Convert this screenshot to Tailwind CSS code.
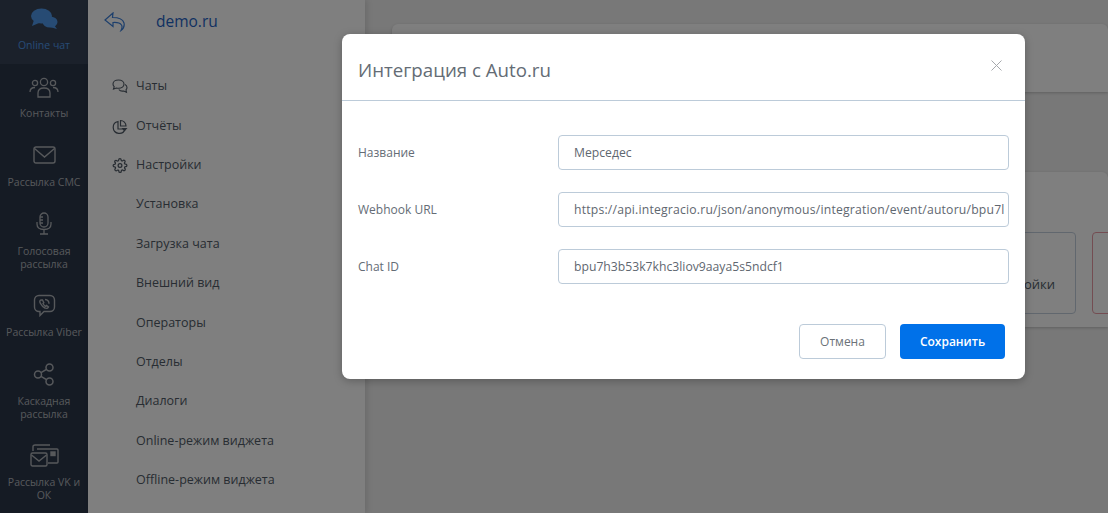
<!DOCTYPE html>
<html lang="ru">
<head>
  <meta charset="UTF-8">
  <title>Интеграция с Auto.ru</title>
  <script src="https://cdn.jsdelivr.net/npm/@tailwindcss/browser@4"></script>
</head>
<body class="relative h-[513px] w-[1108px] overflow-hidden bg-white font-['Open_Sans','Noto_Sans',sans-serif]">

  <!-- page behind the modal -->
  <div class="flex h-full">
    <nav class="flex w-[88px] shrink-0 flex-col items-center bg-[#2a3649] text-center text-[10.500px] leading-[13px] text-[#aeb2b7]">
      <div class="flex h-[64px] w-full flex-col items-center bg-[#364357] pt-[8px] text-[#4f97e8]">
        <svg class="h-[22px] w-[28px]" viewBox="0 0 28 22" fill="currentColor"><ellipse cx="11.500" cy="8" rx="10.500" ry="7.500"/><path d="M4 12 2 18l7-3z"/><ellipse cx="20" cy="14" rx="7.500" ry="5.500"/><path d="M24 17l3 4-7-2z"/></svg>
        <span class="mt-[9px]">Online чат</span>
      </div>
      <div class="flex h-[70px] w-full flex-col items-center pt-[13px]">
        <svg class="h-[22px] w-[30px]" viewBox="0 0 30 22" fill="none" stroke="currentColor" stroke-width="1.300"><circle cx="15" cy="5" r="3.600"/><circle cx="6" cy="6" r="2.600"/><circle cx="24" cy="6" r="2.600"/><path d="M9 20v-4c0-3 2-5 6-5s6 2 6 5v4z"/><path d="M1 15c0-3 2-4.500 5-4.500 M29 15c0-3-2-4.500-5-4.500"/></svg>
        <span class="mt-[8px]">Контакты</span>
      </div>
      <div class="flex h-[69px] w-full flex-col items-center pt-[12px]">
        <svg class="h-[18px] w-[23px]" viewBox="0 0 23 18" fill="none" stroke="currentColor" stroke-width="1.400"><rect x="1" y="1" width="21" height="16" rx="2"/><path d="M1.500 2.500 11.500 11l10-8.500"/></svg>
        <span class="mt-[12px]">Рассылка СМС</span>
      </div>
      <div class="flex h-[90px] w-full flex-col items-center pt-[9px]">
        <svg class="h-[23px] w-[16px]" viewBox="0 0 16 23" fill="none" stroke="currentColor" stroke-width="1.300"><rect x="4" y="1" width="8" height="14" rx="4"/><path d="M4 5h3M4 8h3M4 11h3M1 10v2c0 3.500 3 5.500 7 5.500s7-2 7-5.500v-2M8 17.500V22M4 22h8"/></svg>
        <span class="mt-[10px]">Голосовая<br>рассылка</span>
      </div>
      <div class="flex h-[70px] w-full flex-col items-center pt-[1px]">
        <svg class="h-[23px] w-[23px]" viewBox="0 0 23 23" fill="none" stroke="currentColor" stroke-width="1.400"><path d="M6 1.500h11c2.500 0 4.500 2 4.500 4.500v7c0 2.500-2 4.500-4.500 4.500h-6L7 21.500v-4H6c-2.500 0-4.500-2-4.500-4.500V6c0-2.500 2-4.500 4.500-4.500z"/><path d="M8 6c-1.500.5-1.500 2-.5 3.500 1 2 2.500 3.500 4.500 4.500 1.500.8 3 .3 3.500-1l-2-1.500-1 .8c-1-.5-2-1.500-2.500-2.700l.8-1L9.500 6zM12 5.500c2.500.2 4 1.800 4 4.200"/></svg>
        <span class="mt-[9px]">Рассылка Viber</span>
      </div>
      <div class="flex h-[81px] w-full flex-col items-center">
        <svg class="h-[23px] w-[22px]" viewBox="0 0 22 23" fill="none" stroke="currentColor" stroke-width="1.500"><circle cx="5" cy="11.500" r="3.500"/><circle cx="16.500" cy="4.500" r="3.500"/><circle cx="16.500" cy="18.500" r="3.500"/><path d="m8 9.700 5.500-3.400M8 13.300l5.500 3.400"/></svg>
        <span class="mt-[9px]">Каскадная<br>рассылка</span>
      </div>
      <div class="flex w-full flex-col items-center">
        <svg class="h-[23px] w-[29px]" viewBox="0 0 29 23" fill="none" stroke="currentColor" stroke-width="1.400"><path d="M3 7V2.500C3 1.500 4 1 5 1h15M7 5h20c.6 0 1 .4 1 1v12c0 .6-.4 1-1 1h-9"/><rect x="1" y="9" width="16" height="13" rx="1.500"/><path d="m1.500 11 7.500 6 7.500-6"/><rect x="21" y="8" width="4" height="3.500" fill="currentColor"/></svg>
        <span class="mt-[9px] w-[76px]">Рассылка VK и ОК</span>
      </div>
    </nav>

    <aside class="relative w-[277px] shrink-0 bg-white text-[12.500px] text-[#505a66] shadow-[2px_0_6px_rgba(0,0,0,0.12)]">
      <div class="flex h-[44px] items-center pl-[16px]">
        <svg class="h-[20px] w-[21px] text-[#3a7ed8]" viewBox="0 0 21 20" fill="none" stroke="currentColor" stroke-width="1.200"><path d="M9 1 1 8l8 6.500V10.500c4-.3 7 .5 8.500 2.500 1 1.500.5 3.500-.5 5.500 3-2 3.500-5 3-7.500-1-3.500-5-5.500-11.500-5.500z"/></svg>
        <span class="ml-[31px] text-[15.500px] text-[#1f63c4]">demo.ru</span>
      </div>
      <ul class="mt-[23px]">
        <li class="flex h-[39.400px] items-center pl-[24px]">
          <svg class="mr-[8px] h-[15px] w-[16px]" viewBox="0 0 16 15" fill="none" stroke="currentColor" stroke-width="1.100"><path d="M6.500 1C3 1 1 3 1 5c0 1 .5 2 1.200 2.700L1.500 10l2.800-1c.7.200 1.400.3 2.200.3 3.200 0 5.500-1.800 5.500-4.200S9.700 1 6.500 1z"/><path d="M13 5.500c1.300.7 2 1.700 2 3 0 1-.4 1.700-1 2.300l.5 2.500-2.700-1.300c-2 .4-4-.2-5-1.500"/></svg>
          Чаты
        </li>
        <li class="flex h-[39.400px] items-center pl-[24px]">
          <svg class="mr-[8px] h-[15px] w-[16px]" viewBox="0 0 16 15" fill="none" stroke="currentColor" stroke-width="1.200"><path d="M6 2.500a6 6 0 1 0 7 7.500H6z"/><path d="M8.500 1.500v5.500H14a5.500 5.500 0 0 0-5.500-5.500z"/><path d="M9.500 9h6l-3 3.500z" fill="currentColor" stroke="none"/></svg>
          Отчёты
        </li>
        <li class="flex h-[39.400px] items-center pl-[24px]">
          <svg class="mr-[8px] h-[15px] w-[16px]" viewBox="0 0 24 24" fill="none" stroke="currentColor" stroke-width="2"><circle cx="12" cy="12" r="3"/><path d="M19.400 15a1.650 1.650 0 0 0 .33 1.820l.06.06a2 2 0 1 1-2.830 2.830l-.06-.06a1.650 1.650 0 0 0-2.800 1.170V21a2 2 0 0 1-4 0v-.09a1.650 1.650 0 0 0-2.830-1.140l-.06.06a2 2 0 1 1-2.830-2.830l.06-.06a1.650 1.650 0 0 0-1.170-2.800H3a2 2 0 0 1 0-4h.09a1.650 1.650 0 0 0 1.140-2.830l-.06-.06a2 2 0 1 1 2.830-2.830l.06.06a1.650 1.650 0 0 0 2.800-1.170V3a2 2 0 0 1 4 0v.09a1.650 1.650 0 0 0 2.830 1.140l.06-.06a2 2 0 1 1 2.830 2.830l-.06.06a1.650 1.650 0 0 0 1.170 2.800H21a2 2 0 0 1 0 4h-.09a1.650 1.650 0 0 0-1.510 1z"/></svg>
          Настройки
        </li>
        <li class="flex h-[39.400px] items-center pl-[48px]">Установка</li>
        <li class="flex h-[39.400px] items-center pl-[48px]">Загрузка чата</li>
        <li class="flex h-[39.400px] items-center pl-[48px]">Внешний вид</li>
        <li class="flex h-[39.400px] items-center pl-[48px]">Операторы</li>
        <li class="flex h-[39.400px] items-center pl-[48px]">Отделы</li>
        <li class="flex h-[39.400px] items-center pl-[48px]">Диалоги</li>
        <li class="flex h-[39.400px] items-center pl-[48px]">Online-режим виджета</li>
        <li class="flex h-[39.400px] items-center pl-[48px]">Offline-режим виджета</li>
      </ul>
    </aside>

    <main class="flex-1 overflow-hidden bg-[#f0f0f0] pl-[27px] pt-[24px]">
      <div class="h-[68px] rounded-t-[6px] bg-white shadow-[0_1px_3px_rgba(0,0,0,0.2)]"></div>
      <div class="mt-[80px] h-[155px] rounded-t-[6px] bg-white pl-[560px] pt-[60px] shadow-[0_1px_3px_rgba(0,0,0,0.2)]">
        <div class="flex gap-[16px]">
          <div class="flex h-[82px] w-[124px] shrink-0 items-end justify-center rounded-[4px] border border-[#c3cfdd] pb-[19px] pl-[14px] text-[13px] text-[#505a66]">Настройки</div>
          <div class="h-[82px] w-[124px] shrink-0 rounded-[4px] border border-[#e89aa5]"></div>
        </div>
      </div>
    </main>
  </div>

  <!-- modal backdrop -->
  <div class="absolute inset-0 bg-black/50"></div>

  <div class="absolute left-[342px] top-[34px] w-[683px] rounded-[8px] bg-white shadow-[0_2px_8px_rgba(0,0,0,0.25)]">
    <header class="relative flex h-[67px] items-center border-b border-[#bccbd9] pl-[16px] pt-[6px] text-[18.700px] text-[#646c75]">
      Интеграция с Auto.ru
      <svg class="absolute right-[23px] top-[26px] h-[11px] w-[11px] text-[#a6a9ad]" viewBox="0 0 11 11" fill="none" stroke="currentColor" stroke-width="1"><path d="m.5.5 10 10M10.500.5l-10 10"/></svg>
    </header>
    <div class="flex flex-col gap-[22px] px-[16px] pt-[34px] text-[12px] text-[#646c75]">
      <label class="flex items-center">
        <span class="w-[200px] shrink-0">Название</span>
        <div class="h-[35px] w-[451px] overflow-hidden whitespace-nowrap rounded-[4px] border border-[#bccbd9] pl-[15px] text-[12.200px] leading-[34px] text-[#5f6770]">Мерседес</div>
      </label>
      <label class="flex items-center">
        <span class="w-[200px] shrink-0">Webhook URL</span>
        <div class="h-[35px] w-[451px] overflow-hidden rounded-[4px] border border-[#bccbd9] pl-[15px] text-[12.200px] leading-[33px] tracking-[0.2px] text-[#5f6770]">https://api.integracio.ru/json/anonymous/integration/event/autoru/bpu7l</div>
      </label>
      <label class="flex items-center">
        <span class="w-[200px] shrink-0">Chat ID</span>
        <div class="h-[35px] w-[451px] overflow-hidden whitespace-nowrap rounded-[4px] border border-[#bccbd9] pl-[15px] text-[12.200px] leading-[34px] text-[#5f6770]">bpu7h3b53k7khc3liov9aaya5s5ndcf1</div>
      </label>
    </div>
    <footer class="mt-[40px] flex justify-end gap-[14px] pb-[20px] pr-[20px] text-[12px]">
      <button class="h-[35px] w-[87px] rounded-[4px] border border-[#bccbd9] bg-white text-[#6b7278]">Отмена</button>
      <button class="h-[35px] w-[105px] rounded-[4px] bg-[#0071e9] font-semibold text-white">Сохранить</button>
    </footer>
  </div>

</body>
</html>
